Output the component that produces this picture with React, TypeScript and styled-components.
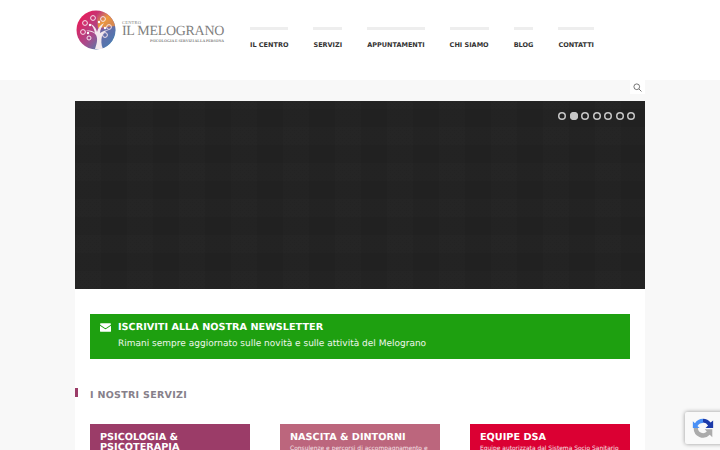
import React from 'react';
import styled, {createGlobalStyle} from 'styled-components';

const GlobalStyle = createGlobalStyle`
    html, body {
        margin: 0;
        padding: 0;
        height: 450px;
        overflow: hidden;
        background: #f8f8f8;
        font-family: "DejaVu Sans", sans-serif;
        text-rendering: geometricPrecision;
    }
`

const menu = ['IL CENTRO', 'SERVIZI', 'APPUNTAMENTI', 'CHI SIAMO', 'BLOG', 'CONTATTI']

const services = [
    {color: '#9b3c68', title: 'PSICOLOGIA & PSICOTERAPIA', text: ''},
    {color: '#bc667d', title: 'NASCITA & DINTORNI', text: 'Consulenze e percorsi di accompagnamento e'},
    {color: '#db0033', title: 'EQUIPE DSA', text: 'Equipe autorizzata dal Sistema Socio Sanitario'},
]

const Logo = () => (
    <LogoWrap>
        <svg width="40" height="40" viewBox="0 0 40 40">
            <defs>
                <linearGradient id="pom" x1="0.05" y1="0.3" x2="0.8" y2="0.95">
                    <stop offset="0" stopColor="#e0215f"/>
                    <stop offset="0.5" stopColor="#a84a8c"/>
                    <stop offset="1" stopColor="#2f8fb5"/>
                </linearGradient>
                <linearGradient id="pomTop" x1="0.2" y1="0" x2="0.9" y2="0.6">
                    <stop offset="0" stopColor="#e08a50" stopOpacity="0"/>
                    <stop offset="0.6" stopColor="#ee9a3c"/>
                    <stop offset="1" stopColor="#d98a50"/>
                </linearGradient>
            </defs>
            <circle cx="20" cy="20" r="19.5" fill="url(#pom)"/>
            <path d="M20 .5A19.5 19.5 0 0 1 39 16L22 18z" fill="url(#pomTop)"/>
            <path d="M39 17A19.500 19.500 0 0 1 26 38.600L24 20z" fill="#5d6fae" opacity="0.7"/>
            <path d="M19 39c2-6 3-10 1-14-2-3-6-4-10-4 4-1 7 0 9 2-1-4-2-7-5-9 4 1 6 4 7 8 1-4 3-7 7-9-2 3-4 7-4 10 3-2 6-3 9-3-4 1-6 3-7 6-1 4-1 9 1 13z" fill="#f3e9ee"/>
            <g fill="none" stroke="#f6e6ee" strokeWidth="1">
                <circle cx="9" cy="13" r="2.400"/>
                <circle cx="17" cy="8" r="2.400"/>
                <circle cx="27" cy="9" r="2.400"/>
                <circle cx="33" cy="17" r="2.400"/>
                <circle cx="7" cy="22" r="2.400"/>
                <circle cx="13" cy="28" r="2"/>
                <circle cx="29" cy="25" r="2.400"/>
            </g>
            <g fill="#fff">
                <circle cx="14" cy="15" r="1.200"/>
                <circle cx="23" cy="12" r="1.200"/>
                <circle cx="29" cy="18" r="1.200"/>
                <circle cx="12" cy="23" r="1.200"/>
            </g>
        </svg>
        <LogoText>
            <LogoSmall>CENTRO</LogoSmall>
            <LogoName>IL MELOGRANO</LogoName>
            <LogoTagline>PSICOLOGIA E SERVIZI ALLA PERSONA</LogoTagline>
        </LogoText>
    </LogoWrap>
)

const Captcha = () => (
    <CaptchaBadge>
        <svg width="22" height="22" viewBox="0 0 26 26">
            <path d="M13 2a11 11 0 0 1 9 4.600L25 4v9h-9l3-3a7 7 0 0 0-6-3.400z" fill="#1c3aa9"/>
            <path d="M13 2A11 11 0 0 0 3.500 7.500L1 5v8h8L6.500 10.500A7 7 0 0 1 13 7z" fill="#4a90f5"/>
            <path d="M2 13h5a6 6 0 0 0 10.500 4L15 14.500h9V24l-3-3A11 11 0 0 1 2 13z" fill="#ababab"/>
        </svg>
    </CaptchaBadge>
)

export default function App() {
    return (
        <>
            <GlobalStyle/>
            <Header>
                <HeaderInner>
                    <Logo/>
                    <Nav>
                        {menu.map(item => <NavItem key={item}>{item}</NavItem>)}
                    </Nav>
                </HeaderInner>
            </Header>
            <Container>
                <SearchRow>
                    <SearchButton>
                        <svg width="9" height="9" viewBox="0 0 12 12" fill="none" stroke="#666" strokeWidth="1.200">
                            <circle cx="5" cy="5" r="3.800"/>
                            <path d="M8 8l3.300 3.300"/>
                        </svg>
                    </SearchButton>
                </SearchRow>
                <Slider>
                    <Dots>
                        {[0, 1, 2, 3, 4, 5, 6].map(i => <Dot key={i} $active={i === 1}/>)}
                    </Dots>
                </Slider>
                <Main>
                    <Newsletter>
                        <MailIcon width="11" height="9" viewBox="0 0 14 11" fill="#fff">
                            <path d="M1.200 0h11.600c.7 0 1.200.5 1.200 1.200 0 .5-.3.9-.7 1.200L7.700 6a1.300 1.300 0 0 1-1.400 0L.7 2.400C.3 2.100 0 1.700 0 1.200 0 .5.500 0 1.200 0z"/>
                            <path d="M0 3.400l5.800 3.800c.8.500 1.600.5 2.400 0L14 3.400v6.400c0 .7-.5 1.200-1.200 1.200H1.200C.5 11 0 10.500 0 9.800z"/>
                        </MailIcon>
                        <div>
                            <NewsletterTitle>ISCRIVITI ALLA NOSTRA NEWSLETTER</NewsletterTitle>
                            <NewsletterText>Rimani sempre aggiornato sulle novità e sulle attività del Melograno</NewsletterText>
                        </div>
                    </Newsletter>
                    <SectionTitle>I NOSTRI SERVIZI</SectionTitle>
                    <Cards>
                        {services.map(s => (
                            <Card key={s.title} $color={s.color}>
                                <CardTitle>{s.title}</CardTitle>
                                {s.text && <CardText>{s.text}</CardText>}
                            </Card>
                        ))}
                    </Cards>
                </Main>
            </Container>
            <Captcha/>
        </>
    );
}

const Header = styled.header`
    background: #fff;
    height: 80px;
`

const HeaderInner = styled.div`
    width: 570px;
    margin: 0 auto;
    display: flex;
    align-items: flex-start;
`

const LogoWrap = styled.div`
    display: flex;
    align-items: flex-start;
    width: 175px;
    padding: 10px 0 0 1px;
    box-sizing: border-box;
`

const LogoText = styled.div`
    margin: 10px 0 0 6px;
    display: flex;
    flex-direction: column;
    color: #7f7f7f;
    font-family: "Liberation Serif", serif;
`

const LogoSmall = styled.span`
    font-size: 4.500px;
    line-height: 5px;
    letter-spacing: 0.200px;
`

const LogoName = styled.span`
    font-size: 14px;
    line-height: 13px;
    letter-spacing: -0.300px;
    white-space: nowrap;
`

const LogoTagline = styled.span`
    font-size: 3.800px;
    line-height: 6px;
    text-align: right;
    white-space: nowrap;
    font-weight: bold;
`

const Nav = styled.nav`
    display: flex;
    gap: 25px;
    padding-top: 27px;
`

const NavItem = styled.div`
    border-top: 3px solid #eeeeee;
    padding-top: 11px;
    font-size: 6.500px;
    line-height: 9px;
    font-weight: 700;
    color: #333;
    white-space: nowrap;
`

const Container = styled.div`
    width: 570px;
    margin: 0 auto;
`

const SearchRow = styled.div`
    display: flex;
    justify-content: flex-end;
    height: 21px;
`

const SearchButton = styled.div`
    width: 15px;
    height: 14px;
    background: #fff;
    display: flex;
    align-items: center;
    justify-content: center;
`

const Slider = styled.div`
    height: 188px;
    background-color: #232323;
    background-image:
        repeating-linear-gradient(90deg, rgba(255, 255, 255, 0.004) 0 26px, rgba(0, 0, 0, 0.03) 26px 52px),
        repeating-linear-gradient(0deg, rgba(255, 255, 255, 0.004) 0 18px, rgba(0, 0, 0, 0.03) 18px 36px);
    display: flex;
    justify-content: flex-end;
    padding: 11px 10px 0 0;
    box-sizing: border-box;
`

const Dots = styled.div`
    display: flex;
    gap: 3.500px;
    height: 8px;
`

const Dot = styled.span<{$active: boolean}>`
    width: 8px;
    height: 8px;
    border-radius: 50%;
    box-shadow: inset 0 0 0 1.500px #c8c8c8;
    background: ${props => props.$active ? '#c8c8c8' : 'transparent'};
`

const Main = styled.main`
    background: #fff;
    border-radius: 0 0 4px 4px;
    padding: 25px 15px 0;
    height: 200px;
`

const Newsletter = styled.div`
    background: #1ea010;
    height: 45px;
    display: flex;
    align-items: flex-start;
    gap: 7px;
    padding: 7px 10px 0;
    box-sizing: border-box;
    color: #fff;
`

const MailIcon = styled.svg`
    margin-top: 2px;
`

const NewsletterTitle = styled.div`
    font-size: 9.700px;
    line-height: 14px;
    font-weight: 700;
`

const NewsletterText = styled.div`
    margin-top: 2px;
    font-size: 9px;
    line-height: 14px;
    color: #eef6ec;
`

const SectionTitle = styled.h2`
    position: relative;
    margin: 30px 0 0;
    font-size: 9.500px;
    line-height: 14px;
    font-weight: 700;
    letter-spacing: 0.300px;
    color: #86808a;

    &::before {
        content: '';
        position: absolute;
        left: -15px;
        top: -1px;
        width: 3px;
        height: 9px;
        background: #9b3c68;
    }
`

const Cards = styled.div`
    display: grid;
    grid-template-columns: repeat(3, 160px);
    gap: 30px;
    margin-top: 21px;
`

const Card = styled.div<{$color: string}>`
    background: ${props => props.$color};
    height: 120px;
    padding: 9px 10px;
    box-sizing: border-box;
    color: #fff;
`

const CardTitle = styled.div`
    font-size: 9.700px;
    line-height: 10px;
    font-weight: 700;
`

const CardText = styled.div`
    margin-top: 1px;
    font-size: 5.950px;
    line-height: 9px;
    color: #f6e4e8;
    white-space: nowrap;
`

const CaptchaBadge = styled.div`
    position: fixed;
    left: 685px;
    top: 412px;
    width: 60px;
    height: 32px;
    background: #f9f9f9;
    border-radius: 2px;
    box-shadow: 0 0 4px rgba(0, 0, 0, 0.4);
    padding: 5px 0 0 7px;
    box-sizing: border-box;
`
